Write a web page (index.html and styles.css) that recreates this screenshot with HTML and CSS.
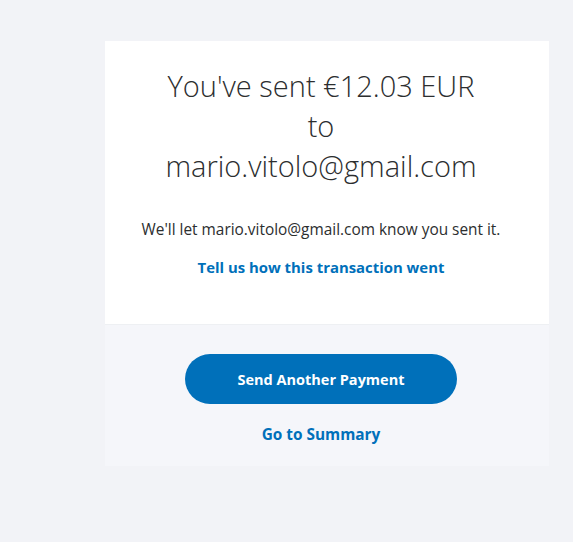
FILE: index.html
```html
<!DOCTYPE html>
<html lang="en">
<head>
<meta charset="utf-8">
<title>Payment sent</title>
<link rel="stylesheet" href="styles.css">
</head>
<body>
<main class="page">
  <section class="card">
    <div class="card-top">
      <h1 class="headline">You've sent €12.03 EUR<br>to<br>mario.vitolo@gmail.com</h1>
      <p class="note">We'll let mario.vitolo@gmail.com know you sent it.</p>
      <a class="link" href="#">Tell us how this transaction went</a>
    </div>
    <div class="card-bottom">
      <a class="btn" href="#">Send Another Payment</a>
      <a class="link link-summary" href="#">Go to Summary</a>
    </div>
  </section>
</main>
</body>
</html>
```
FILE: styles.css
```css
html, body {
  margin: 0;
  padding: 0;
}
body {
  background: #f2f3f7;
  font-family: "Open Sans", "Noto Sans", sans-serif;
  color: #2c2e2f;
}
.page {
  padding: 41px 0 0 105px;
}
.card {
  width: 444px;
  display: flex;
  flex-direction: column;
}
.card-top {
  background: #ffffff;
  padding: 25px 12px 47px 0;
  display: flex;
  flex-direction: column;
  align-items: center;
  text-align: center;
  border-bottom: 1px solid #eef0f3;
  height: 211px;
}
.headline {
  margin: 0;
  font-weight: 300;
  font-size: 29px;
  line-height: 40px;
  color: #2c2e2f;
  white-space: nowrap;
}
.note {
  margin: 34px 0 0;
  font-size: 15.4px;
  line-height: 20px;
  white-space: nowrap;
}
.link {
  margin-top: 17px;
  font-size: 14.9px;
  line-height: 20px;
  font-weight: 700;
  color: #0070ba;
  text-decoration: none;
}
.card-bottom {
  background: #f5f6fa;
  padding: 29px 12px 21px 0;
  display: flex;
  flex-direction: column;
  align-items: center;
}
.btn {
  width: 272px;
  height: 50px;
  border-radius: 25px;
  background: #0070ba;
  color: #ffffff;
  font-weight: 700;
  font-size: 14.5px;
  display: flex;
  align-items: center;
  justify-content: center;
  text-decoration: none;
}
.link-summary {
  margin-top: 21px;
  font-size: 15.4px;
}
```
